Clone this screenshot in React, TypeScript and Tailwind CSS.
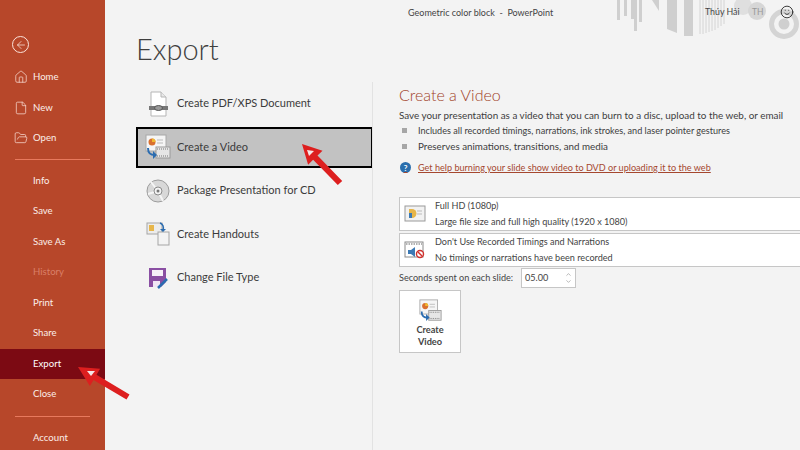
import { ArrowLeft, ChevronDown, ChevronUp, House, File, FolderOpen, Smile } from "lucide-react"

const font = { fontFamily: 'Lato, "Open Sans", sans-serif' }

function NavItem({ label, active, muted }: { label: string; active?: boolean; muted?: boolean }) {
  return (
    <div className={`flex h-[30.5px] shrink-0 items-center pl-[33px] text-[9.6px] ${active ? "bg-[#7c0a13] text-white" : muted ? "text-[#d97f68]" : "text-[#fbeee9]"}`}>
      {label}
    </div>
  )
}

function NavIconItem({ label, icon }: { label: string; icon: React.ReactNode }) {
  return (
    <div className="relative flex h-[30.5px] shrink-0 items-center pl-[33px] text-[9.6px] text-[#fbeee9]">
      <span className="absolute left-[14px] top-[8px] text-[#f7d9cf]">{icon}</span>
      {label}
    </div>
  )
}

function PdfIcon() {
  return (
    <svg width="24" height="26" viewBox="0 0 24 26">
      <path d="M5 1h10l5 5v19H5z" fill="#fff" stroke="#b5b5b5" />
      <path d="M15 1v5h5" fill="#e8e8e8" stroke="#b5b5b5" />
      <rect x="3" y="15" width="19" height="4" fill="#777" />
      <ellipse cx="12.5" cy="17" rx="4" ry="2.5" fill="#999" stroke="#555" />
    </svg>
  )
}

function VideoIcon({ size = 26 }: { size?: number }) {
  return (
    <svg width={size} height={size} viewBox="0 0 26 26">
      <rect x="1" y="1" width="20" height="16" fill="#f5f5f5" stroke="#a8a8a8" />
      <circle cx="7" cy="8" r="3.5" fill="#d9702f" />
      <path d="M7 4.5a3.5 3.5 0 0 1 3.5 3.5H7z" fill="#f0b92e" />
      <path d="M12 6h6M12 9h6" stroke="#bbb" />
      <rect x="11" y="13" width="14" height="11" fill="#e6e6e6" stroke="#9a9a9a" />
      <path d="M12 15h12M12 22h12" stroke="#777" strokeDasharray="1 1" />
      <path d="M3 14c0 6 3 7 7 7" fill="none" stroke="#2b6cb0" strokeWidth="2" />
      <path d="M8 17l4 4-4 4z" fill="#2b6cb0" />
    </svg>
  )
}

function CdIcon() {
  return (
    <svg width="24" height="24" viewBox="0 0 24 24">
      <circle cx="12" cy="12" r="11" fill="#d8d8d8" stroke="#9c9c9c" />
      <path d="M12 12L5 3M12 12L2 15M12 12l5 10" stroke="#f5f5f5" strokeWidth="2" />
      <circle cx="12" cy="12" r="4" fill="#f3f3f3" stroke="#8a8a8a" />
      <circle cx="12" cy="12" r="1.5" fill="#777" />
    </svg>
  )
}

function HandoutIcon() {
  return (
    <svg width="24" height="24" viewBox="0 0 24 24">
      <rect x="1" y="1" width="15" height="11" fill="#ececec" stroke="#a5a5a5" />
      <rect x="3" y="3" width="5" height="6" fill="#e7b64a" />
      <rect x="12" y="10" width="11" height="13" fill="#f3f3f3" stroke="#a5a5a5" />
      <path d="M14 1c3 1 4 4 3 7" fill="none" stroke="#2b6cb0" strokeWidth="1.5" />
      <path d="M14 7l3 3 3-3z" fill="#2b6cb0" />
    </svg>
  )
}

function ChangeTypeIcon() {
  return (
    <svg width="22" height="22" viewBox="0 0 22 22">
      <path d="M2 1h17v14l-5 5H2z" fill="#8a4fa3" />
      <rect x="5" y="3" width="11" height="6" fill="#f6f0f8" />
      <rect x="6" y="14" width="7" height="6" fill="#f1e6f5" />
      <path d="M11 21l9-9" stroke="#2b6cb0" strokeWidth="2.5" />
    </svg>
  )
}

function ExportRow({ label, icon, selected }: { label: string; icon: React.ReactNode; selected?: boolean }) {
  return (
    <div className={`flex h-[41px] items-center text-[11px] text-[#3b3b3b] ${selected ? "border-2 border-black bg-[#c2c2c2]" : "border-2 border-transparent"}`}>
      <span className="flex w-[39px] justify-center pl-[1px]">{icon}</span>
      <span>{label}</span>
    </div>
  )
}

function TitleArt() {
  return (
    <svg className="absolute left-[610px] top-0" width="190" height="40" viewBox="0 0 190 40">
      <g fill="#cfcfcf">
        <rect x="7" width="3" height="20" />
        <rect x="14" width="3" height="16" />
        <rect x="21" width="3" height="19" />
        <rect x="24" width="3" height="31" />
        <rect x="29" width="3" height="22" />
        <path d="M42 0h7v11z" />
        <path d="M57 0h10v33l-10-4z" />
        <rect x="74" width="9" height="36" />
      </g>
      <g stroke="#d4d4d4" strokeWidth="1">
        <path d="M90 0v34M93 0v34M96 0v33M99 0v32M102 0v31M105 0v30M108 0v28M111 0v26M114 0v24" />
      </g>
      <circle cx="133" cy="6" r="9" fill="#dfdfdf" />
      <circle cx="147" cy="11" r="9" fill="#d6d6d6" />
      <circle cx="174" cy="24" r="12.5" fill="none" stroke="#d4d4d4" strokeWidth="5" />
      <circle cx="174" cy="24" r="5.5" fill="#cfcfcf" />
    </svg>
  )
}

export default function App() {
  return (
    <div className="relative flex h-[450px] w-[800px] overflow-hidden bg-[#f3f3f3]" style={font}>
      <aside className="flex h-full w-[105px] shrink-0 flex-col bg-[#b7472a]">
        <div className="h-[62px] shrink-0 pl-[12px] pt-[36px]">
          <div className="flex size-[17px] items-center justify-center rounded-full border border-[#fbe3da] text-[#fbe3da]">
            <ArrowLeft size={12} strokeWidth={1.5} />
          </div>
        </div>
        <NavIconItem label="Home" icon={<House size={14} strokeWidth={1.3} />} />
        <NavIconItem label="New" icon={<File size={14} strokeWidth={1.3} />} />
        <NavIconItem label="Open" icon={<FolderOpen size={14} strokeWidth={1.3} />} />
        <div className="mx-[15px] my-[5.5px] h-px shrink-0 bg-[#e8795d]" />
        <NavItem label="Info" />
        <NavItem label="Save" />
        <NavItem label="Save As" />
        <NavItem label="History" muted />
        <NavItem label="Print" />
        <NavItem label="Share" />
        <NavItem label="Export" active />
        <NavItem label="Close" />
        <div className="mx-[15px] my-[6px] h-px shrink-0 bg-[#e8795d]" />
        <NavItem label="Account" />
      </aside>

      <main className="flex min-w-0 flex-1 flex-col">
        <header className="relative flex h-[83px] shrink-0 flex-col pl-[31px]">
          <div className="absolute left-[303px] top-[6px] whitespace-nowrap text-[9px] text-[#444]">Geometric color block&nbsp; -&nbsp; PowerPoint</div>
          <h1 className="mt-[31px] text-[29px] font-light leading-[36px] text-[#3f3f3f]">Export</h1>
        </header>

        <div className="flex flex-1">
          <nav className="ml-[31px] flex w-[237px] shrink-0 flex-col gap-[2.5px]">
            <ExportRow label="Create PDF/XPS Document" icon={<PdfIcon />} />
            <ExportRow label="Create a Video" icon={<VideoIcon />} selected />
            <ExportRow label="Package Presentation for CD" icon={<CdIcon />} />
            <ExportRow label="Create Handouts" icon={<HandoutIcon />} />
            <ExportRow label="Change File Type" icon={<ChangeTypeIcon />} />
          </nav>

          <div className="-mt-[1px] ml-[-1px] h-[368px] w-px shrink-0 bg-[#e2e2e2]" />

          <section className="ml-[26px] min-w-0 flex-1">
            <h2 className="text-[16px] font-light leading-[24px] text-[#a13f27]">Create a Video</h2>
            <p className="mt-[0.5px] whitespace-nowrap text-[9.9px] leading-[15px] text-[#3d3d3d]">
              Save your presentation as a video that you can burn to a disc, upload to the web, or email
            </p>
            <ul className="text-[#3d3d3d]">
              <li className="flex h-[16px] items-center gap-[11px] pl-[3px] text-[9.1px]">
                <span className="size-[5px] bg-[#a6a6a6]" />
                Includes all recorded timings, narrations, ink strokes, and laser pointer gestures
              </li>
              <li className="flex h-[16px] items-center gap-[11px] pl-[3px] text-[9.8px]">
                <span className="size-[5px] bg-[#a6a6a6]" />
                Preserves animations, transitions, and media
              </li>
            </ul>
            <div className="mt-[6px] flex h-[14px] items-center gap-[7px] pl-[1px] text-[9.1px] text-[#a5472f] underline">
              <span className="flex size-[11px] items-center justify-center rounded-full bg-[#2a6ead] text-[8px] font-bold text-white no-underline">?</span>
              Get help burning your slide show video to DVD or uploading it to the web
            </div>

            <div className="mt-[22.5px] flex w-[420px] flex-col gap-[2px] text-[9.1px] text-[#444]">
              <div className="flex h-[34px] items-center border border-[#c6c6c6] bg-white pl-[4px]">
                <svg width="22" height="20" viewBox="0 0 22 20">
                  <rect x="1" y="2" width="20" height="15" fill="#f2f2f2" stroke="#9a9a9a" />
                  <path d="M5 5h3a4 4 0 0 1 0 9H5z" fill="#e7b64a" />
                  <path d="M5 9h3v5H5z" fill="#3c7ab5" />
                  <path d="M13 7h5M13 10h5" stroke="#bbb" />
                </svg>
                <div className="ml-[9px] leading-[16px]">
                  <div>Full HD (1080p)</div>
                  <div>Large file size and full high quality (1920 x 1080)</div>
                </div>
              </div>
              <div className="flex h-[33.5px] items-center border border-[#c6c6c6] bg-white pl-[4px]">
                <svg width="22" height="22" viewBox="0 0 22 22">
                  <rect x="1" y="3" width="18" height="15" fill="#fff" stroke="#8a8a8a" />
                  <path d="M2 5h16" stroke="#666" strokeDasharray="1.5 1" />
                  <path d="M4 11h3l4-3v10l-4-3H4z" fill="#3c7ab5" />
                  <circle cx="16" cy="15" r="3.5" fill="#fff" stroke="#d0312d" strokeWidth="1.4" />
                  <path d="M14 13l4 4" stroke="#d0312d" strokeWidth="1.4" />
                </svg>
                <div className="ml-[9px] leading-[16px]">
                  <div>Don't Use Recorded Timings and Narrations</div>
                  <div>No timings or narrations have been recorded</div>
                </div>
              </div>
            </div>

            <div className="mt-[1px] flex items-center text-[9.1px] text-[#444]">
              <span className="w-[122px] whitespace-nowrap">Seconds spent on each slide:</span>
              <div className="flex h-[20px] w-[55px] items-center justify-between border border-[#c6c6c6] bg-white px-[3px]">
                05.00
                <span className="flex flex-col text-[#888]">
                  <ChevronUp size={7} />
                  <ChevronDown size={7} />
                </span>
              </div>
            </div>

            <button className="mt-[2px] flex h-[63px] w-[62px] flex-col items-center border border-[#c6c6c6] bg-white pt-[8px] text-[9.2px] font-bold leading-[12px] text-[#444]">
              <VideoIcon size={23} />
              <span className="mt-[2px]">Create<br />Video</span>
            </button>
          </section>
        </div>
      </main>

      <TitleArt />
      <div className="absolute left-[705px] top-[5px] text-[8.8px] text-[#444]">Thúy Hải</div>
      <div className="absolute left-[752px] top-[6px] text-[8.5px] text-[#999]">TH</div>
      <Smile className="absolute left-[780px] top-[5px] text-[#222]" size={14} strokeWidth={1.5} />

      <svg className="absolute left-[70px] top-[360px]" width="65" height="42" viewBox="0 0 65 42">
        <path d="M8 7L30.1 8.7 26.5 14.7 59.5 34.4 56.5 39.6 23.5 19.9 19.9 25.9z" fill="#dd1f1f" />
        <path d="M17 11h8l-4 5z" fill="#f5e6e6" />
      </svg>
      <svg className="absolute left-[295px] top-[138px]" width="52" height="52" viewBox="0 0 52 52">
        <path d="M7 6L27.5 12.7 22.5 17.6 47.2 42.9 42.8 47.1 18.1 21.8 13.1 26.7z" fill="#dd1f1f" />
        <path d="M12 12l7 1-5 5z" fill="#f5e6e6" />
      </svg>
    </div>
  )
}
